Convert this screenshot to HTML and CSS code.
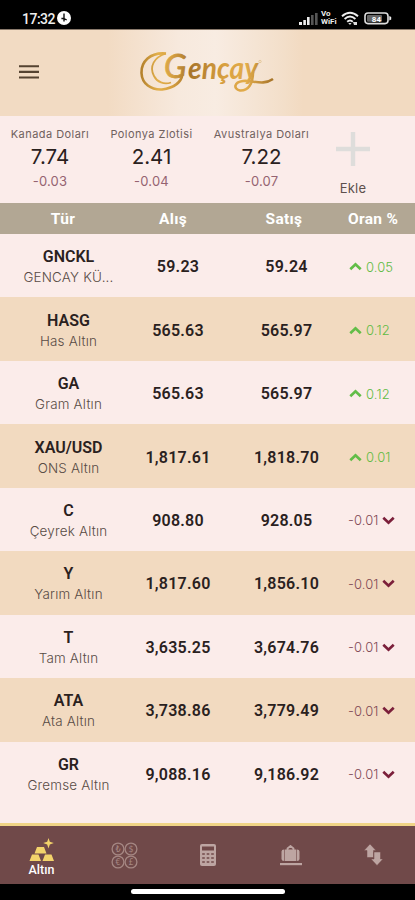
FILE: index.html
```html
<!DOCTYPE html>
<html lang="tr">
<head>
<meta charset="utf-8">
<meta name="viewport" content="width=device-width, initial-scale=1">
<title>Gençay</title>
<link rel="stylesheet" href="styles.css">
</head>
<body>
<div class="status">
  <span class="clock">17:32</span>
  <svg class="badge" width="14" height="14" viewBox="0 0 14 14"><circle cx="7" cy="7" r="7" fill="#fff"/><path d="M7 2.6v5.2M4.4 7.5h3M7 7.5l2.7 1.5M7 8v2.6" stroke="#111" stroke-width="1.4" fill="none"/></svg>
  <svg class="signal" width="20" height="14" viewBox="0 0 20 14"><g fill="#eee"><rect x="0" y="10" width="3" height="3"/><rect x="4.3" y="8" width="2.6" height="5"/><rect x="8" y="5" width="2.6" height="8"/></g><g fill="#555"><rect x="12" y="3" width="2.6" height="10"/><rect x="16" y="1" width="2.6" height="12"/></g></svg>
  <span class="vowifi"><span>Vo</span><span>WiFi</span></span>
  <svg class="wifi" width="18" height="15" viewBox="0 0 18 15"><g fill="none" stroke="#eee" stroke-width="1.9"><path d="M1 5.2Q9-1.8 17 5.2"/><path d="M3.6 8Q9 3.2 14.4 8"/><path d="M6.2 10.8Q9 8.2 11.8 10.8"/></g><path d="M7.2 12h3.4L9 14zM12 11h4v3h-3z" fill="#ddd"/></svg>
  <svg class="battery" width="28" height="13" viewBox="0 0 28 13"><rect x="1" y="1" width="23" height="10.6" rx="3" fill="none" stroke="#ddd" stroke-width="1.6"/><rect x="3" y="3" width="15" height="6.8" rx="1" fill="#666"/><path d="M25.3 4v4.6l1.9-1V5z" fill="#eee"/><text x="12.4" y="9.6" text-anchor="middle" class="battery-text">84</text></svg>
</div>
<header class="top">
  <svg class="menu" width="20" height="14" viewBox="0 0 20 14"><path d="M0 1.3h20M0 6.9h20M0 12.5h20" stroke="#554331" stroke-width="2.1"/></svg>
  <svg class="logo" width="140" height="48" viewBox="0 0 140 48">
    <defs><linearGradient id="gold" x1="0" y1="0" x2="140" y2="0" gradientUnits="userSpaceOnUse"><stop offset="0" stop-color="#a87524"/><stop offset=".15" stop-color="#e3b04b"/><stop offset=".25" stop-color="#d6a041"/><stop offset=".38" stop-color="#a8752b"/><stop offset=".62" stop-color="#d8a040"/><stop offset=".78" stop-color="#e2ac4c"/><stop offset="1" stop-color="#9d6b23"/></linearGradient></defs>
    <path d="M29 4.500C13 3 4 13 4.500 24C5 35 14 41 25 40.500C36 39 44 35 45.500 25" fill="none" stroke="url(#gold)" stroke-width="2.600"/>
    <path d="M29 4.500C17 8 12 18 17 27C20 33 27 36 34 33.500" fill="none" stroke="url(#gold)" stroke-width="1.800"/>
    <text x="27" y="29" class="logo-g" fill="url(#gold)" stroke="url(#gold)">G</text>
    <text x="51" y="30" class="logo-word" fill="url(#gold)" textLength="70" lengthAdjust="spacingAndGlyphs">ençay</text>
    <path d="M116 23C116 35 111 42 103 41.500C96 40 97 33 106 32C116 31 126 37 136 30" fill="none" stroke="url(#gold)" stroke-width="2.600"/>
    <circle cx="123" cy="12.500" r="1.200" fill="none" stroke="#d9b779" stroke-width=".6"/>
  </svg>
</header>
<section class="quotes">
  <div class="quote q1"><span class="q-name">Kanada Doları</span><span class="q-val">7.74</span><span class="q-diff">-0.03</span></div>
  <div class="quote q2"><span class="q-name">Polonya Zlotisi</span><span class="q-val">2.41</span><span class="q-diff">-0.04</span></div>
  <div class="quote q3"><span class="q-name">Avustralya Doları</span><span class="q-val">7.22</span><span class="q-diff">-0.07</span></div>
  <div class="add"><svg width="34" height="34" viewBox="0 0 34 34"><path d="M17 0v34M0 17h34" stroke="#dedddb" stroke-width="4.4"/></svg><span>Ekle</span></div>
</section>
<div class="thead"><span>Tür</span><span>Alış</span><span>Satış</span><span>Oran %</span></div>
<main class="rows" id="rows"></main>
<nav class="nav">
  <div class="tab active"><svg width="26" height="24" viewBox="0 0 26 24"><g fill="#f3d36b"><path d="M8 9h7l2.500 6.500h-12zM3 16.500h6.500l2.500 6.500H.5zM16 16.500h6.500l2.500 6.500H13.500z"/><path d="M19.500 0l1.300 3.800 4 1.300-4 1.300-1.300 4-1.300-4-4-1.300 4-1.300z"/></g></svg><span>Altın</span></div>
  <div class="tab"><svg width="27" height="27" viewBox="0 0 27 27"><g fill="none" stroke="#a58783" stroke-width="1.3"><circle cx="7" cy="7" r="5.900"/><circle cx="20" cy="7" r="5.900"/><circle cx="7" cy="20" r="5.900"/><circle cx="20" cy="20" r="5.900"/></g><g class="coins"><text x="7" y="10">₺</text><text x="20" y="10">$</text><text x="7" y="23">€</text><text x="20" y="23">£</text></g></svg></div>
  <div class="tab"><svg width="16" height="22" viewBox="0 0 16 22"><rect width="16" height="22" rx="2" fill="#bda5a2"/><path d="M2 2.500h12v4H2z" fill="#704949"/><path d="M2.200 10h2.600M6.700 10h2.600M11.200 10h2.600M2.200 14h2.600M6.700 14h2.600M11.200 14h2.600M2.200 18h2.600M6.700 18h2.600M11.200 18h2.600" stroke="#704949" stroke-width="1.600"/></svg></div>
  <div class="tab"><svg width="22" height="21" viewBox="0 0 22 21"><g fill="#bda5a2"><path d="M4 4.500v11.500q-2.500 0-2.500-2V6.500q0-2 2.500-2zM4.600 4.500h11.800V16H4.600zM17 4.500q2.500 0 2.500 2V14q0 2-2.500 2z"/><path d="M0 18h22v2.200H0z"/></g><path d="M7.500 5V3.500L10.500 1l3 2.500V5" fill="none" stroke="#bda5a2" stroke-width="1.800"/></svg></div>
  <div class="tab"><svg width="20" height="22" viewBox="0 0 20 22"><path d="M6 0l6 6.500H9.500V13.500H3V6.500H0zM13 21.500l-6-6.500h3V8h6.500v7H19z" fill="#bda5a2" stroke="#704949" stroke-width=".5"/></svg></div>
</nav>
<div class="home"><i></i></div>
<script src="app.js"></script>
</body>
</html>
```
FILE: styles.css
```css
* { box-sizing: border-box; }
body { margin: 0; width: 415px; height: 900px; overflow: hidden; background: #fbecea; font-family: Roboto, "Liberation Sans", sans-serif; color: #2a211e; display: flex; flex-direction: column; }
svg { display: block; flex: none; }
.status { height: 30px; flex: none; background: #000; border-bottom: 1px solid #8a7a6c; color: #eee; display: flex; align-items: flex-start; padding: 11px 23px 0 22px; }
.clock { font-size: 14px; line-height: 16px; width: 35px; font-weight: 500; letter-spacing: -.5px; }
.signal { margin: 1px 0 0 228px; }
.vowifi { margin: -1px 0 0 2px; width: 20px; display: flex; flex-direction: column; font-size: 8px; line-height: 8px; font-weight: 700; }
.battery { margin: 1px 0 0 5px; }
.battery-text { font-size: 8px; font-weight: 700; fill: #fff; }
.top { height: 86px; flex: none; display: flex; background: linear-gradient(90deg, #f2dbc3 0 26%, #f7e9dd 43%, #f8ece2 52%, #f3dfca 68%, #f2dac1 73%); }
.menu { margin: 35px 0 0 19px; }
.logo { margin: 19px 0 0 98px; overflow: visible; }
.logo-g { font: italic 400 33px Lato, sans-serif; stroke-width: .8px; }
.logo-word { font: italic 700 30px Lato, sans-serif; }
.quotes { height: 87px; flex: none; display: flex; padding-top: 11px; font-family: Inter, Roboto, sans-serif; }
.quote { display: flex; flex-direction: column; align-items: center; white-space: nowrap; }
.q1 { width: 100px; }
.q2 { width: 103px; }
.q3 { width: 117px; }
.q-name { font-size: 11px; line-height: 14px; letter-spacing: .45px; color: #70615e; }
.q-val { font-size: 20.5px; line-height: 26px; margin-top: 3px; letter-spacing: 0; }
.q-diff { font-size: 13px; line-height: 18px; margin-top: 2px; letter-spacing: .2px; color: #956371; }
.add { width: 66px; display: flex; flex-direction: column; align-items: center; padding-top: 5px; }
.add span { font-size: 13px; line-height: 18px; margin-top: 13px; letter-spacing: .2px; color: #5d504d; }
.thead { height: 31px; flex: none; background: #b2a794; color: #fff; display: grid; grid-template-columns: 126px 94px 128px 50px; line-height: 32px; font-size: 15.5px; font-weight: 700; text-align: center; letter-spacing: .3px; white-space: nowrap; }
.rows { flex: none; height: 589px; display: flex; flex-direction: column; }
.row { height: 63.450px; flex: none; display: grid; grid-template-columns: 137px 82px 135px 61px; align-items: center; text-align: center; }
.row:nth-child(even) { background: #f2dac0; }
.name { display: flex; flex-direction: column; align-items: center; padding-top: 3px; }
.code { font-size: 16px; line-height: 20px; font-weight: 600; }
.desc { font-family: Inter, Roboto, sans-serif; font-weight: 300; font-size: 13.4px; line-height: 20px; letter-spacing: .2px; color: #584b45; white-space: nowrap; }
.price { font-size: 16px; font-weight: 600; letter-spacing: .25px; padding-top: 2px; }
.rate { display: flex; align-items: center; font-family: Inter, Roboto, sans-serif; font-size: 13px; font-weight: 300; padding-top: 2px; white-space: nowrap; }
.up { color: #5fbb43; margin-left: -5px; gap: 4px; letter-spacing: .1px; }
.down { color: #7f4955; margin-left: -6px; gap: 3px; letter-spacing: .1px; }
.nav { height: 61px; flex: none; background: #704949; border-top: 3px solid #f0d486; display: grid; grid-template-columns: repeat(5, 83px); }
.tab { display: flex; align-items: center; justify-content: center; }
.active { flex-direction: column; color: #fff; font-size: 12.500px; line-height: 15px; font-weight: 500; }
.active svg { margin-top: 4px; }
.coins { font: 8px "DejaVu Sans", sans-serif; fill: #a58783; text-anchor: middle; }
.home { flex: 1; background: #000; display: flex; justify-content: center; padding-top: 5px; }
.home i { width: 154px; height: 5px; border-radius: 3px; background: #fff; }
```
FILE: app.js
```js
const data = [
  ["GNCKL", "GENCAY KÜ...", "59.23", "59.24", "0.05"],
  ["HASG", "Has Altın", "565.63", "565.97", "0.12"],
  ["GA", "Gram Altın", "565.63", "565.97", "0.12"],
  ["XAU/USD", "ONS Altın", "1,817.61", "1,818.70", "0.01"],
  ["C", "Çeyrek Altın", "908.80", "928.05", "-0.01"],
  ["Y", "Yarım Altın", "1,817.60", "1,856.10", "-0.01"],
  ["T", "Tam Altın", "3,635.25", "3,674.76", "-0.01"],
  ["ATA", "Ata Altın", "3,738.86", "3,779.49", "-0.01"],
  ["GR", "Gremse Altın", "9,088.16", "9,186.92", "-0.01"]
];
const up = '<svg width="13" height="9" viewBox="0 0 13 9"><path d="M1.300 7.200L6.500 2.300l5.200 4.900" fill="none" stroke="#62bd48" stroke-width="2.700"/></svg>';
const down = '<svg width="13" height="9" viewBox="0 0 13 9"><path d="M1.300 1.800L6.500 6.700l5.200-4.900" fill="none" stroke="#7b1f3a" stroke-width="2.700"/></svg>';
document.getElementById("rows").innerHTML = data.map(([code, desc, buy, sell, rate]) => {
  const neg = rate.startsWith("-");
  const cell = neg ? `<span>${rate}</span>${down}` : `${up}<span>${rate}</span>`;
  return `<div class="row"><div class="name"><span class="code">${code}</span><span class="desc">${desc}</span></div><div class="price">${buy}</div><div class="price">${sell}</div><div class="rate ${neg ? "down" : "up"}">${cell}</div></div>`;
}).join("");
```
